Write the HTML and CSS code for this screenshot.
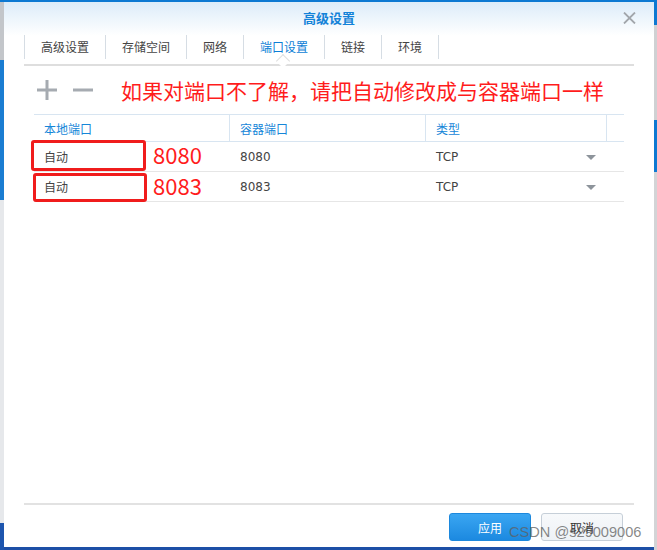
FILE: index.html
```html
<!DOCTYPE html>
<html>
<head>
  <title>高级设置</title>
  <meta charset="utf-8" />
  <link rel="stylesheet" href="styles.css">
</head>
<body>
  <div class="window">
    <div class="titlebar">
      <span class="title">高级设置</span>
      <svg class="close" width="13" height="12" viewBox="0 0 13 12"><path d="M1 0.5 L12 11.5 M12 0.5 L1 11.5" stroke="#a2a6ab" stroke-width="1.8" fill="none"/></svg>
    </div>

    <div class="tabs">
      <span class="tab">高级设置</span>
      <span class="tab">存储空间</span>
      <span class="tab">网络</span>
      <span class="tab active">端口设置</span>
      <span class="tab">链接</span>
      <span class="tab">环境</span>
    </div>

    <div class="toolbar">
      <svg class="tool" width="20" height="20" viewBox="0 0 20 20"><rect x="8.5" y="0" width="3" height="20" fill="#a6abb1"/><rect x="0" y="8.5" width="20" height="3" fill="#a6abb1"/></svg>
      <svg class="tool" width="20" height="20" viewBox="0 0 20 20"><rect x="0" y="8.5" width="20" height="3" fill="#a6abb1"/></svg>
      <span class="note">如果对端口不了解，请把自动修改成与容器端口一样</span>
    </div>

    <div class="grid">
      <div class="row head">
        <div class="cell c1">本地端口</div>
        <div class="cell c2">容器端口</div>
        <div class="cell c3">类型</div>
        <div class="cell c4"></div>
      </div>
      <div class="row">
        <div class="cell c1">自动</div>
        <div class="cell c2">8080</div>
        <div class="cell c3">TCP<span class="arrow"></span></div>
        <div class="cell c4"></div>
      </div>
      <div class="row">
        <div class="cell c1">自动</div>
        <div class="cell c2">8083</div>
        <div class="cell c3">TCP<span class="arrow"></span></div>
        <div class="cell c4"></div>
      </div>

      <div class="mark mark1"></div>
      <div class="mark mark2"></div>
      <span class="num num1">8080</span>
      <span class="num num2">8083</span>
    </div>

    <div class="spacer"></div>

    <div class="footer">
      <button class="btn primary">应用</button>
      <button class="btn">取消</button>
    </div>
  </div>

  <div class="watermark">CSDN @s29009006</div>
</body>
</html>
```

FILE: styles.css
```css
html, body { margin: 0; padding: 0; height: 100%; }
body {
  font-family: "DejaVu Sans", "Noto Sans CJK SC", sans-serif;
  font-size: 12px;
  color: #444;
  overflow: hidden;
  background:
    linear-gradient(#0d79d2, #0d79d2) 0 0 / 100% 2px no-repeat,
    linear-gradient(to bottom, #c3c6ca 0 60px, #1a7dd2 60px 200px, #e6e8eb 200px 523px, #1d55ae 523px) 0 0 / 4px 100% no-repeat,
    linear-gradient(to bottom, #0d79d2 0 25px, #cfd1d3 25px 120px, #0d79d2 120px 172px, #d3d4d6 172px) right 0 / 3px 100% no-repeat,
    #1d4fa6;
}

.window {
  position: relative;
  margin: 2px 0 0 4px;
  width: 650px;
  height: 545px;
  display: flex;
  flex-direction: column;
  background: linear-gradient(#dcecf9 0, #ffffff 34px) no-repeat, #fff;
}

.titlebar { position: relative; height: 32px; box-sizing: border-box; padding-bottom: 2px; display: flex; align-items: center; justify-content: center; }
.title { font-family: "Noto Sans CJK SC", sans-serif; font-size: 13px; font-weight: bold; color: #1382d8; }
.close { position: absolute; right: 18px; top: 10px; }

.tabs {
  margin: 0 20px;
  height: 30px;
  display: flex;
  border-bottom: 2px solid #dedede;
}
.tab {
  position: relative;
  margin-top: 1px;
  height: 24px;
  line-height: 24px;
  padding: 0 16px;
  border-right: 1px solid #d6dde4;
  font-family: "Noto Sans CJK SC", sans-serif;
  color: #444;
}
.tab:first-child { border-left: 1px solid #d6dde4; padding-left: 16px; }
.tab.active { color: #0c7ed6; }
.tab.active::after {
  content: "";
  position: absolute;
  left: 50%;
  bottom: -7px;
  margin-left: -6px;
  width: 9px;
  height: 9px;
  background: #fff;
  border-left: 1px solid #dedede;
  border-top: 1px solid #dedede;
  transform: rotate(45deg);
}

.toolbar { height: 48px; display: flex; align-items: center; padding-left: 33px; }
.tool { margin-right: 16px; }
.tool + .tool { margin-right: 28px; }
.note { font-family: "Noto Sans CJK SC", sans-serif; font-size: 21px; color: #ff1c1c; line-height: 1; }

.grid { position: relative; margin: 0 30px; }
.row { display: flex; height: 29px; border-bottom: 1px solid #e6e6e6; }
.row.head { height: 26px; border-top: 1px solid #d8e5f1; border-bottom: 1px solid #d8e5f1; }
.cell { display: flex; align-items: center; position: relative; box-sizing: border-box; }
.c1 { width: 196px; padding-left: 9px; }
.c2 { width: 196px; padding-left: 9px; }
.c3 { width: 181px; padding-left: 9px; }
.c4 { flex: 1; }
.head .cell { color: #1686d8; font-family: "Noto Sans CJK SC", sans-serif; }
.head .c1, .head .c2, .head .c3 { border-right: 1px solid #d8e5f1; }
.row .c1 { font-family: "Noto Sans CJK SC", sans-serif; padding-left: 10px; }
.row .c2 { padding-left: 10px; }
.row .c3 { padding-left: 10px; }
.arrow {
  position: absolute;
  right: 11px;
  top: 13px;
  border-left: 5px solid transparent;
  border-right: 5px solid transparent;
  border-top: 5px solid #8d949b;
}

.mark { position: absolute; border: 3px solid #f01c1c; border-radius: 3px; box-sizing: border-box; }
.mark1 { left: -3px; top: 26px; width: 115px; height: 31px; }
.mark2 { left: -1px; top: 59px; width: 114px; height: 29px; }
.num {
  position: absolute;
  left: 119px;
  font-family: "Noto Sans CJK SC", sans-serif;
  font-size: 22px;
  line-height: 30px;
  color: #ff1c1c;
}
.num1 { top: 25px; }
.num2 { top: 56px; }

.spacer { flex: 1; }

.footer {
  margin: 0 20px;
  border-top: 2px solid #e2e2e2;
  padding: 8px 11px 6px 0;
  display: flex;
  justify-content: flex-end;
  gap: 10px;
}
.btn {
  width: 82px;
  height: 28px;
  border-radius: 3px;
  font-family: "Noto Sans CJK SC", sans-serif;
  font-size: 12px;
  border: 1px solid #c6cfd8;
  background: linear-gradient(#f7f9fb, #eef2f6);
  color: #333;
  padding: 0;
}
.btn.primary {
  width: 82px;
  border-color: #1c88dd;
  background: linear-gradient(#3aa6f2, #1c89e0);
  color: #fff;
}

.watermark {
  position: absolute;
  left: 509px;
  top: 524px;
  font-family: "Liberation Sans", sans-serif;
  font-size: 14.6px;
  color: rgba(95, 95, 95, 0.75);
}
```
